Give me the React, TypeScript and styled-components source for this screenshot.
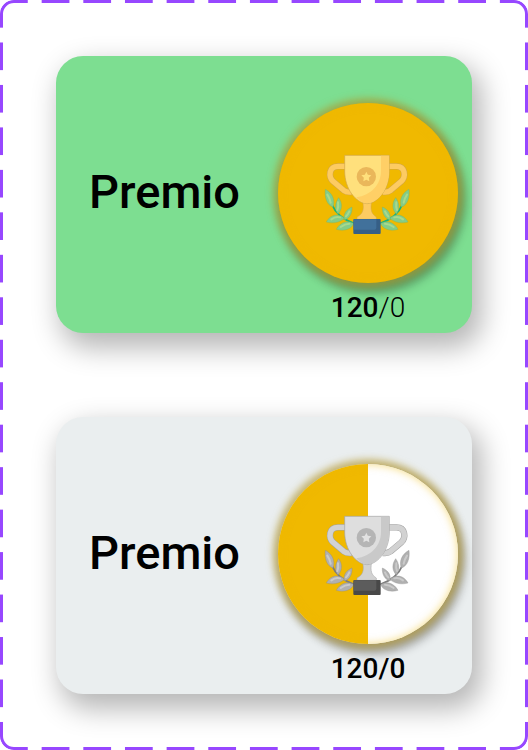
import React from "react";
import styled, { createGlobalStyle } from "styled-components";

const GlobalStyle = createGlobalStyle`
  *, *::before { box-sizing: border-box; }
  body {
    margin: 0;
    background: #fff;
    color: #000;
    font-family: Roboto, "Liberation Sans", sans-serif;
  }
`;

const Frame = styled.main`
  position: relative;
  min-height: 100vh;
  padding: 56px;
  display: flex;
  flex-direction: column;
  gap: 84px;

  &::before {
    content: "";
    position: absolute;
    inset: 0;
    border: 3px solid #9747ff;
    border-radius: 14px;
    pointer-events: none;
    --across: linear-gradient(90deg, #000 28px, transparent 28px);
    --down: linear-gradient(#000 28px, transparent 28px);
    mask-image: var(--across), var(--across), var(--down), var(--down);
    mask-clip: border-box;
    mask-origin: border-box;
    mask-position: left top, left bottom, left top, right top;
    mask-repeat: repeat-x, repeat-x, repeat-y, repeat-y;
    mask-size:
      calc((100% - 28px) / 12) 14px,
      calc((100% - 28px) / 12) 14px,
      14px calc((100% - 28px) / 17),
      14px calc((100% - 28px) / 17);
  }
`;

const Card = styled.article<{ $earned: boolean }>`
  display: grid;
  grid-template-columns: 1fr 1fr;
  min-height: 277px;
  border-radius: 27px;
  background: ${(p) => (p.$earned ? "#7dde91" : "#eaeeef")};
  box-shadow: 7px 12px 28px 3px rgba(0, 0, 0, 0.29);
`;

const Title = styled.h2`
  margin: 0;
  padding: 0 0 5px 9px;
  align-self: center;
  text-align: center;
  font-size: 47px;
  line-height: 56px;
  font-weight: 500;
`;

const Reward = styled.div`
  display: flex;
  flex-direction: column;
  align-items: center;
  padding-top: 47px;
  gap: 8px;
`;

const Medal = styled.div<{ $earned: boolean }>`
  display: grid;
  place-items: center;
  width: 180px;
  height: 180px;
  border-radius: 50%;
  background: ${(p) =>
    p.$earned ? "#f0b900" : "linear-gradient(90deg, #f0b900 50%, #fff 50%)"};
  box-shadow:
    inset 0 0 8px rgba(240, 185, 0, 0.5),
    0 0 7px 5px rgba(180, 150, 40, 0.6),
    4px 7px 10px 3px rgba(0, 0, 0, 0.3);
`;

const Points = styled.p`
  margin: 0;
  font-size: 28px;
  line-height: 34px;
  font-weight: 500;
`;

const Goal = styled.span<{ $light: boolean }>`
  font-weight: ${(p) => (p.$light ? 300 : 500)};
`;

const color = {
  edge: "#d0a548", handle: "#fdcb62", cup: "#ffe07c", shade: "#ffcf66",
  disc: "#eab75a", star: "#ffe07c", leaf: "#84cc88", leafLight: "#a9d98c",
  leafEdge: "#74b060", stalk: "#19b37a", base: "#41719b", baseShade: "#365f86",
};
const gray = {
  edge: "#a2a2a2", handle: "#d2d2d2", cup: "#dedede", shade: "#c9c9c9",
  disc: "#b5b5b5", star: "#e2e2e2", leaf: "#b0b0b0", leafLight: "#cacaca",
  leafEdge: "#858585", stalk: "#7c7c7c", base: "#5c5c5c", baseShade: "#484848",
};

const leaves = [
  "M46 148 C66 158 77 180 69 201 C50 195 43 172 46 148Z",
  "M86 173 C98 190 97 208 84 222 C73 207 75 188 86 173Z",
  "M49 246 C62 222 86 219 104 235 C87 249 67 251 49 246Z",
  "M126 201 C127 221 119 235 103 240 C99 222 109 208 126 201Z",
  "M79 268 C91 246 113 240 131 250 C126 267 103 275 79 268Z",
];

function Branch({ c }: { c: typeof color }) {
  return (
    <>
      <path d="M66 194 C76 219 100 239 132 250" fill="none" stroke={c.stalk} strokeWidth="5" />
      {leaves.map((d) => (
        <path key={d} d={d} fill={c.leaf} stroke={c.leafEdge} strokeWidth="1" />
      ))}
      <g fill="none" stroke={c.leafLight} strokeWidth="6" strokeLinecap="round">
        <path d="M52 164 Q60 176 62 188" />
        <path d="M84 187 Q86 200 82 210" />
        <path d="M64 238 Q77 228 90 232" />
        <path d="M118 214 Q114 223 108 229" />
        <path d="M92 261 Q105 251 118 251" />
      </g>
    </>
  );
}

function Trophy({ earned }: { earned: boolean }) {
  const c = earned ? color : gray;
  return (
    <svg width="88" height="82" viewBox="42 36 264 246" role="img" aria-label="Trofeo">
      <Branch c={c} />
      <g transform="matrix(-1 0 0 1 343 0)"><Branch c={c} /></g>
      <g fill="none" strokeLinejoin="round">
        <path d="M108 79 H84 C56 79 55 110 69 124 L101 151 Q110 158 124 156 M235 79 H259 C287 79 288 110 274 124 L242 151 Q233 158 219 156" stroke={c.edge} strokeWidth="19" />
        <path d="M108 79 H84 C56 79 55 110 69 124 L101 151 Q110 158 124 156 M235 79 H259 C287 79 288 110 274 124 L242 151 Q233 158 219 156" stroke={c.handle} strokeWidth="16" />
      </g>
      <path d="M158 184 H185 C180 211 185 222 199 231 V238 H141 V231 C158 222 163 211 158 184Z" fill={c.handle} stroke={c.edge} strokeWidth="1.5" />
      <path d="M104 46 H238 V93 C238 146 205 189 171 191 C137 189 104 146 104 93Z" fill={c.cup} stroke={c.edge} strokeWidth="2" />
      <path d="M213 47 H237 V93 C237 146 205 189 171 190 C160 190 147 182 139 172 C183 166 213 134 213 93Z" fill={c.shade} />
      <circle cx="169" cy="110" r="29" fill={c.disc} />
      <path d="M169 95 L173.500 104.500 L184 106 L176.500 113.500 L178 124 L169 119 L160 124 L161.500 113.500 L154 106 L164.500 104.500Z" fill={c.star} />
      <rect x="130" y="237" width="82" height="45" rx="3" fill={c.baseShade} />
      <path d="M133 238 H199 V263 Q199 269 193 269 H131 V240Z" fill={c.base} />
    </svg>
  );
}

function PrizeCard({ earned }: { earned: boolean }) {
  return (
    <Card $earned={earned}>
      <Title>Premio</Title>
      <Reward>
        <Medal $earned={earned}>
          <Trophy earned={earned} />
        </Medal>
        <Points>
          120<Goal $light={earned}>/0</Goal>
        </Points>
      </Reward>
    </Card>
  );
}

export default function App() {
  return (
    <>
      <GlobalStyle />
      <Frame>
        <PrizeCard earned />
        <PrizeCard earned={false} />
      </Frame>
    </>
  );
}
